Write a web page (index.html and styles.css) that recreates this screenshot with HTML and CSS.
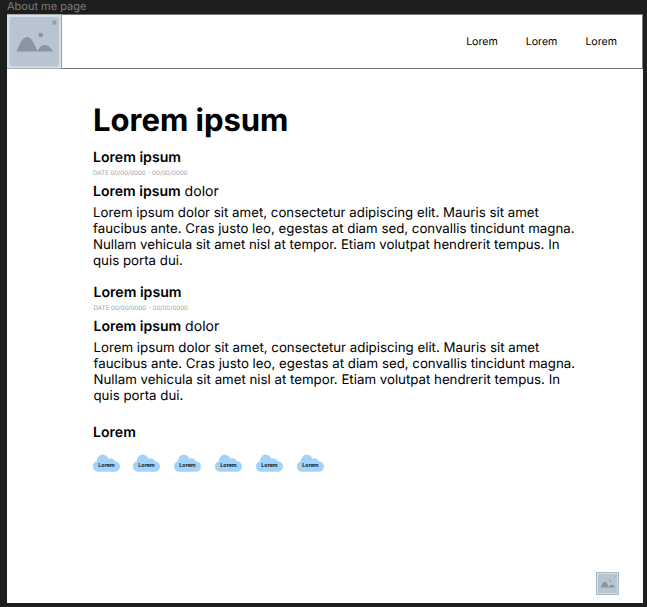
FILE: index.html
```html
<!DOCTYPE html>
<html lang="en">
<head>
<meta charset="utf-8">
<title>About me page</title>
<link rel="stylesheet" href="styles.css">
</head>
<body>
<svg class="symbols" aria-hidden="true">
  <symbol id="picture" viewBox="0 0 54 54">
    <rect width="54" height="54" fill="#d4e1eb"/>
    <rect x="2.5" y="2.5" width="49.5" height="49.5" rx="2" fill="#b8c5d1"/>
    <path d="M9.500 37C13 29 15 23 20 22.500C25 23 27 29 30.500 36.500C33 32 35 30.500 38 30.500C41.500 30.500 44 33.500 46 37Z" fill="#8996a1"/>
    <circle cx="33.700" cy="20.500" r="2.300" fill="#8996a1"/>
    <path d="M45.500 6.300l3.800 3.800m0-3.800l-3.800 3.800" stroke="#8996a1" stroke-width="1.300"/>
  </symbol>
  <symbol id="cloud" viewBox="0 0 27 18">
    <path d="M5.300 17.700A5.300 5.300 0 0 1 4.300 7.200A5.600 5.600 0 0 1 15.200 4.700A5 5 0 0 1 21.800 7.200A5.250 5.250 0 0 1 21.700 17.700Z" fill="#a3d3f8"/>
    <circle cx="9.900" cy="6.500" r="5.500" fill="#a3d3f8"/>
  </symbol>
</svg>
<div class="frame-label">About me page</div>
<div class="page">
  <header class="topbar">
    <svg class="logo"><use href="#picture"/></svg>
    <nav class="nav"><span>Lorem</span><span>Lorem</span><span>Lorem</span></nav>
  </header>
  <main class="content">
    <h1>Lorem ipsum</h1>
    <section class="entry">
      <h2>Lorem ipsum</h2>
      <div class="date">DATE 00/00/0000 - 00/00/0000</div>
      <h3><b>Lorem ipsum</b> dolor</h3>
      <p>Lorem ipsum dolor sit amet, consectetur adipiscing elit. Mauris sit amet<br>faucibus ante. Cras justo leo, egestas at diam sed, convallis tincidunt magna.<br>Nullam vehicula sit amet nisl at tempor. Etiam volutpat hendrerit tempus. In<br>quis porta dui.</p>
    </section>
    <section class="entry second">
      <h2>Lorem ipsum</h2>
      <div class="date">DATE 00/00/0000 - 00/00/0000</div>
      <h3><b>Lorem ipsum</b> dolor</h3>
      <p>Lorem ipsum dolor sit amet, consectetur adipiscing elit. Mauris sit amet<br>faucibus ante. Cras justo leo, egestas at diam sed, convallis tincidunt magna.<br>Nullam vehicula sit amet nisl at tempor. Etiam volutpat hendrerit tempus. In<br>quis porta dui.</p>
    </section>
    <h2 class="skills-title">Lorem</h2>
    <div class="skills">
      <div class="cloud"><svg><use href="#cloud"/></svg><span>Lorem</span></div>
      <div class="cloud"><svg><use href="#cloud"/></svg><span>Lorem</span></div>
      <div class="cloud"><svg><use href="#cloud"/></svg><span>Lorem</span></div>
      <div class="cloud"><svg><use href="#cloud"/></svg><span>Lorem</span></div>
      <div class="cloud"><svg><use href="#cloud"/></svg><span>Lorem</span></div>
      <div class="cloud"><svg><use href="#cloud"/></svg><span>Lorem</span></div>
    </div>
  </main>
  <footer class="footer"><svg class="badge" viewBox="0 0 54 54"><use href="#picture"/></svg></footer>
</div>
</body>
</html>
```
FILE: styles.css
```css
* { box-sizing: border-box; }
body {
  margin: 0;
  height: 607px;
  overflow: hidden;
  background: #1e1e1e;
  font-family: Inter, "Liberation Sans", sans-serif;
  color: #000;
  text-rendering: geometricPrecision;
}
svg { display: block; }
.symbols { position: absolute; width: 0; height: 0; }
.frame-label {
  height: 14px;
  padding-left: 7px;
  font-size: 11px;
  line-height: 13px;
  color: #7c7c7c;
  white-space: nowrap;
}
.page {
  display: flex;
  flex-direction: column;
  width: 636px;
  height: 589px;
  margin-left: 7px;
  background: #fff;
}
.topbar {
  display: flex;
  justify-content: space-between;
  height: 55px;
  border: 1px solid #777;
  border-left: 0;
}
.logo { width: 55px; height: 55px; margin-top: -1px; border-right: 1px solid #8fa0ad; }
.nav {
  display: flex;
  gap: 28px;
  align-items: center;
  padding: 0 25px 1px 0;
  font-size: 10.6px;
}
.content { flex: 1; padding: 31px 0 0 86px; }
h1, h2, h3, p { margin: 0; white-space: nowrap; }
h1 { font-size: 31.1px; line-height: 40px; font-weight: 700; letter-spacing: -0.05px; }
h2 { margin-top: 9px; font-size: 14.1px; line-height: 17px; font-weight: 600; }
.date { margin-top: 4px; font-size: 6.15px; line-height: 8px; color: #9aa5b1; }
h3 { margin-top: 5px; font-size: 14.05px; line-height: 18px; font-weight: 400; }
h3 b { font-weight: 600; }
p { margin-top: 4px; font-size: 13.27px; line-height: 16px; }
.second { padding-top: 6px; margin-left: 0.5px; }
.skills-title { margin-top: 20px; }
.skills { display: flex; gap: 14px; margin-top: 13px; }
.cloud { display: grid; width: 27px; height: 18px; }
.cloud:first-child { margin-right: -1px; }
.cloud svg, .cloud span { grid-area: 1 / 1; }
.cloud svg { width: 27px; height: 18px; }
.cloud span { padding-top: 8px; font-size: 5.4px; line-height: 8px; font-weight: 600; text-align: center; }
.footer { display: flex; justify-content: flex-end; padding: 0 24px 8px 0; }
.badge { width: 23px; height: 23px; border: 1px solid #a9b8c4; }
```
